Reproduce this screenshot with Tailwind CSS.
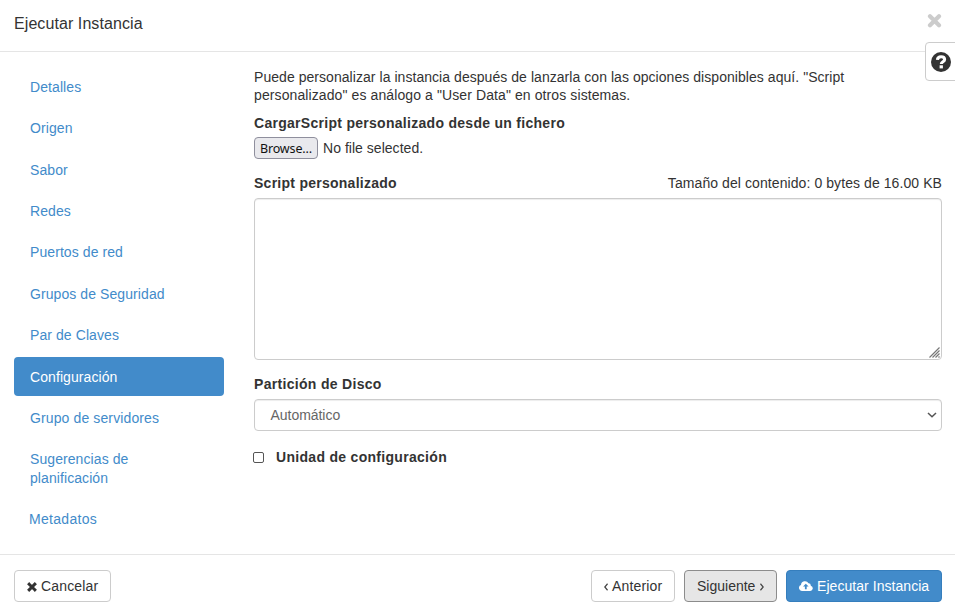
<!DOCTYPE html>
<html lang="es">
<head>
<meta charset="utf-8">
<title>Ejecutar Instancia</title>
<script src="https://cdn.jsdelivr.net/npm/@tailwindcss/browser@4"></script>
</head>
<body class="bg-white">
<div class="relative flex h-[613px] w-[955px] flex-col overflow-hidden bg-white font-['Liberation_Sans',sans-serif] text-[14px] leading-[18.5px] tracking-[0.08px] text-[#333]">

  <header class="flex h-[52px] shrink-0 items-start justify-between border-b border-[#e5e5e5] pr-[13px] pl-[14px]">
    <h1 class="mt-[13px] text-[16px] leading-[22px]">Ejecutar Instancia</h1>
    <button class="mt-[14px]" aria-label="Cerrar">
      <svg class="block h-[14px] w-[15px]" viewBox="0 0 15 14"><path d="M3 2.3 12 11.3M12 2.3 3 11.3" stroke="#ccc" stroke-width="4.2" stroke-linecap="round"/></svg>
    </button>
  </header>

  <button class="absolute top-[42px] right-[-4px] h-[39px] w-[34px] rounded-[4px] border border-[#ccc] bg-white" aria-label="Ayuda">
    <svg class="ml-[5px] block size-[20px]" viewBox="0 0 20 20"><circle cx="10" cy="10" r="10" fill="#333"/><path d="M6.4 7.8C6.6 5.6 8 4.7 10.1 4.7s3.5 1 3.5 2.8c0 2.3-3.3 2.3-3.3 4.5" fill="none" stroke="#fff" stroke-width="3.1"/><rect x="8.6" y="13.3" width="3.3" height="3.1" fill="#fff"/></svg>
  </button>

  <main class="flex h-[502px] shrink-0 pl-[14px] pr-[13px] pt-[15px]">
    <nav class="mr-[30px] flex w-[210px] shrink-0 flex-col gap-[2px] text-[#428bca]">
      <a class="flex h-[39.43px] items-center pl-[16px] pt-[0.6px]">Detalles</a>
      <a class="flex h-[39.43px] items-center pl-[16px]">Origen</a>
      <a class="flex h-[39.43px] items-center pl-[16px] pt-[0.8px]">Sabor</a>
      <a class="flex h-[39.43px] items-center pl-[16px]">Redes</a>
      <a class="flex h-[39.43px] items-center pl-[16px]">Puertos de red</a>
      <a class="flex h-[39.43px] items-center pl-[16px]">Grupos de Seguridad</a>
      <a class="flex h-[39.43px] items-center pl-[16px]">Par de Claves</a>
      <a class="flex h-[39.43px] items-center rounded-[4px] bg-[#428bca] pl-[16px] pt-[0.8px] text-white">Configuración</a>
      <a class="flex h-[39.43px] items-center pl-[16px] tracking-[0.12px]">Grupo de servidores</a>
      <a class="flex h-[58px] items-center pl-[16px]">Sugerencias de<br>planificación</a>
      <a class="flex h-[39.43px] items-center pl-[15px] tracking-[0.3px]">Metadatos</a>
    </nav>

    <section class="flex w-[688px] flex-col">
      <p class="mt-px h-[37px] leading-[18px] tracking-[0.05px]">Puede personalizar la instancia después de lanzarla con las opciones disponibles aquí. "Script<br><span class="tracking-[0.1px]">personalizado" es análogo a "User Data" en otros sistemas.</span></p>
      <label class="mt-[9px] font-bold tracking-[0.285px]">CargarScript personalizado desde un fichero</label>
      <div class="mt-[4.5px] flex h-[22px] items-center">
        <button class="h-[22px] w-[64px] rounded-[4px] border border-[#8f8f9d] bg-[#e9e9ed] pt-px font-['Noto_Sans',sans-serif] text-[12.5px] leading-[20px] tracking-[-0.15px] text-[#111]">Browse…</button>
        <span class="ml-[5px] tracking-[0.03px]">No file selected.</span>
      </div>
      <div class="mt-[14.5px] flex justify-between">
        <label class="font-bold tracking-[0.26px]">Script personalizado</label>
        <span class="tracking-[0.08px]">Tamaño del contenido: 0 bytes de 16.00 KB</span>
      </div>
      <div class="mt-[5.5px] flex h-[162px] items-end justify-end rounded-[4px] border border-[#ccc] pr-px shadow-[inset_0_1px_1px_rgba(0,0,0,0.075)]">
        <svg class="block h-[12px] w-[11px]" viewBox="0 0 11 12"><path d="M.5 10.5 10.5 .5M3.5 10.5 10.5 3.5M6.5 10.5 10.5 6.5M9.5 10.5 10.5 9.5" stroke="#777" stroke-width="1.2"/></svg>
      </div>
      <label class="mt-[15px] font-bold tracking-[0.31px]">Partición de Disco</label>
      <div class="mt-[6px] flex h-[32px] items-center justify-between rounded-[4px] border border-[#ccc] pr-[4px] pl-[15.5px] tracking-[-0.04px] text-[#666] shadow-[inset_0_1px_1px_rgba(0,0,0,0.075)]">
        <span>Automático</span>
        <svg class="block h-[6px] w-[10px]" viewBox="0 0 10 6"><path d="M1 1 5 4.8 9 1" fill="none" stroke="#555" stroke-width="1.5"/></svg>
      </div>
      <div class="mt-[17px] flex items-center">
        <span class="-ml-px size-[11px] rounded-[2px] border border-[#555] bg-white"></span>
        <label class="ml-[12px] font-bold tracking-[0.3px]">Unidad de configuración</label>
      </div>
    </section>
  </main>

  <footer class="flex h-[59px] shrink-0 items-start border-t border-[#e5e5e5] pt-[15px] pr-[13px] pl-[14px]">
    <button class="flex h-[32px] w-[97px] items-center rounded-[4px] border border-[#ccc] pl-[12px] tracking-[0.15px]">
      <svg class="mr-[4px] mt-px block size-[10px]" viewBox="0 0 10 10"><path d="M2.2 2.2 7.8 7.8M7.8 2.2 2.2 7.8" stroke="#333" stroke-width="3" stroke-linecap="square"/></svg>Cancelar
    </button>
    <button class="ml-auto flex h-[32px] w-[84px] items-center rounded-[4px] border border-[#ccc] pl-[12px] tracking-[0.15px]">
      <svg class="mr-[4px] mt-px block h-[8px] w-[4px]" viewBox="0 0 4 8"><path d="M3.6 .8.8 4l2.8 3.2" fill="none" stroke="#444" stroke-width="1.3"/></svg>Anterior
    </button>
    <button class="ml-[9px] flex h-[32px] w-[93px] items-center rounded-[4px] border border-[#8c8c8c] bg-[#e6e6e6] pl-[12px] tracking-normal">Siguiente<svg class="ml-[4.6px] mt-px block h-[8px] w-[4px]" viewBox="0 0 4 8"><path d="M.4 .8 3.2 4 .4 7.2" fill="none" stroke="#444" stroke-width="1.3"/></svg>
    </button>
    <button class="ml-[9px] flex h-[32px] w-[156px] items-center rounded-[4px] border border-[#357ebd] bg-[#428bca] pl-[12px] tracking-[0.05px] text-white">
      <svg class="mr-[4px] block h-[10px] w-[14px]" viewBox="0 0 14 10"><path d="M3.2 10A3.1 3.1 0 0 1 2 4 4 4 0 0 1 9.5 2.3 2.3 2.3 0 0 1 11.8 4.7 2.7 2.7 0 0 1 11.2 10Z" fill="#fff"/><path d="M4 5.6 6.8 2.7 9.6 5.6H7.7V8.2H5.9V5.6Z" fill="#428bca"/></svg>Ejecutar Instancia
    </button>
  </footer>
</div>
</body>
</html>
